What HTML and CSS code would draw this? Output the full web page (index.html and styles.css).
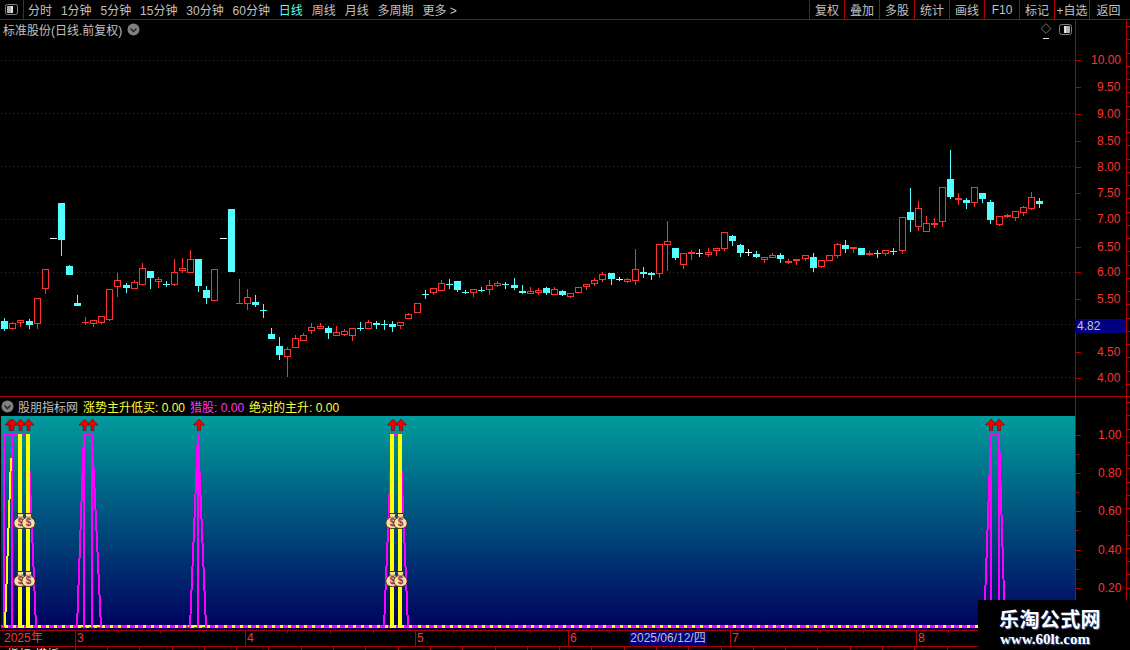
FILE: index.html
```html
<!DOCTYPE html>
<html lang="zh">
<head>
<meta charset="utf-8">
<title>K线图</title>
<link rel="stylesheet" href="styles.css">
</head>
<body>
<div class="page">
  <header class="toolbar">
    <div class="tool-icon">
      <svg class="layout-icon" width="13" height="11" viewBox="0 0 13 11"><rect x="0.5" y="0.5" width="12" height="10" rx="2" fill="#000" stroke="#808080"/><rect x="2" y="2" width="6" height="7" fill="#b0b0b0"/><rect x="6" y="2" width="2" height="7" fill="#e0e0e0"/></svg>
    </div>
    <nav class="periods">
      <span>分时</span><span>1分钟</span><span>5分钟</span><span>15分钟</span><span>30分钟</span><span>60分钟</span>
      <span class="active">日线</span><span>周线</span><span>月线</span><span>多周期</span><span>更多 &gt;</span>
    </nav>
    <div class="actions">
      <span>复权</span><span>叠加</span><span>多股</span><span>统计</span><span>画线</span><span>F10</span><span>标记</span><span>+自选</span><span class="last">返回</span>
    </div>
  </header>

  <section class="upper">
    <div class="plot-col">
      <div class="pane-head">
        <span class="title">标准股份(日线.前复权)</span>
        <svg class="chev" width="13" height="13" viewBox="0 0 13 13"><circle cx="6.5" cy="6.5" r="6" fill="#808080"/><path d="M3.5 5.5 6.5 8.5 9.5 5.5" fill="none" stroke="#222" stroke-width="1.4"/></svg>
        <div class="head-tools">
          <div class="diamond-wrap">
            <svg width="12" height="12" viewBox="0 0 12 12"><path d="M6 .7 11.3 6 6 11.3 .7 6Z" fill="none" stroke="#808080"/></svg>
            <i class="dash"></i>
          </div>
          <svg class="layout-icon" width="13" height="11" viewBox="0 0 13 11"><rect x="0.5" y="0.5" width="12" height="10" rx="2" fill="#000" stroke="#808080"/><rect x="5" y="2" width="6" height="7" fill="#b0b0b0"/><rect x="5" y="2" width="2" height="7" fill="#e0e0e0"/></svg>
        </div>
      </div>
      <svg id="candles" class="plot" width="1075" height="358" viewBox="0 38 1075 358"></svg>
    </div>
    <svg id="price-axis" class="axis" width="55" height="376" viewBox="1075 20 55 376"></svg>
  </section>

  <section class="lower">
    <div class="plot-col">
      <div class="ind-head">
        <svg class="chev" width="13" height="13" viewBox="0 0 13 13"><circle cx="6.5" cy="6.5" r="6" fill="#808080"/><path d="M3.5 5.5 6.5 8.5 9.5 5.5" fill="none" stroke="#222" stroke-width="1.4"/></svg>
        <span class="title">股朋指标网</span>
        <span class="yellow">涨势主升低买: 0.00</span>
        <span class="magenta">猎股: 0.00</span>
        <span class="yellow">绝对的主升: 0.00</span>
      </div>
      <div class="ind-plot">
        <svg id="indicator" class="plot" width="1075" height="214" viewBox="0 416 1075 214"></svg>
      </div>
    </div>
    <svg id="ind-axis" class="axis" width="55" height="234" viewBox="1075 396 55 234"></svg>
  </section>

  <footer class="date-axis">
    <span class="d-year">2025年</span><span class="d-mon">3</span><span class="d-mon">4</span><span class="d-mon">5</span><span class="d-mon">6</span><span class="d-mon">7</span><span class="d-mon">8</span>
    <svg id="date-ticks" class="date-ticks" width="1130" height="16" viewBox="0 631 1130 16"></svg>
    <span class="cursor-date">2025/06/12/四</span>
  </footer>
  <div class="tabs">
    <span>指标</span><span>模板</span>
    <svg id="tab-ticks" class="tab-ticks" width="1130" height="3" viewBox="0 0 1130 3"></svg>
  </div>

  <aside class="watermark">
    <div class="wm-cn">乐淘公式网</div>
    <div class="wm-en">www.60lt.com</div>
  </aside>
</div>
<script src="app.js"></script>
</body>
</html>
```

FILE: styles.css
```css
* { box-sizing: border-box; }
html, body { margin: 0; padding: 0; background: #000; }
body {
  font-family: "Liberation Sans", "Noto Sans CJK SC", sans-serif;
  font-size: 12px;
  color: #c0c0c0;
}
.page {
  position: relative;
  width: 1130px;
  height: 650px;
  overflow: hidden;
  display: flex;
  flex-direction: column;
  background: #000;
}
svg { display: block; }

.toolbar {
  height: 20px;
  flex: none;
  display: flex;
  align-items: stretch;
  border-bottom: 1px solid #b00000;
}
.tool-icon {
  width: 24px;
  flex: none;
  display: flex;
  align-items: center;
  justify-content: center;
  border-right: 1px solid #b00000;
}
.periods {
  display: flex;
  align-items: center;
  gap: 8.9px;
  padding-left: 4px;
  flex: 1;
  white-space: nowrap;
}
.periods .active { color: #54ffff; }
.actions { display: flex; align-items: stretch; padding-right: 3px; }
.actions span {
  width: 35px;
  display: flex;
  align-items: center;
  justify-content: center;
  border-left: 1px solid #b00000;
  white-space: nowrap;
}
.actions .last { width: 38px; }

.upper { display: flex; height: 376px; flex: none; }
.lower { display: flex; height: 234px; flex: none; }
.plot-col { width: 1075px; flex: none; display: flex; flex-direction: column; }
.axis { flex: none; }

.pane-head {
  height: 18px;
  display: flex;
  align-items: center;
  padding: 0 3px;
  gap: 5px;
}
.title { white-space: nowrap; }
.chev { flex: none; }
.head-tools {
  margin-left: auto;
  display: flex;
  align-items: flex-start;
  gap: 7px;
  padding-right: 0;
}
.diamond-wrap { display: flex; flex-direction: column; align-items: center; gap: 4px; height: 16px; margin-top: 3px; }
.dash { display: block; width: 6px; height: 1px; background: #e8e8e8; }
.head-tools .layout-icon { margin-top: 4px; }

.ind-head {
  height: 20px;
  display: flex;
  align-items: center;
  gap: 5px;
  padding-left: 1px;
  border-top: 1px solid #b00000;
  white-space: nowrap;
}
.ind-head .title { margin-left: -1px; }
.yellow { color: #ffff3c; }
.magenta { color: #ff32ff; }
.ind-plot {
  height: 214px;
  margin-left: 1px;
  background: linear-gradient(#009c9c, #00005e);
  overflow: hidden;
}
.ind-plot .plot { margin-left: -1px; }

.date-axis {
  position: relative;
  height: 17px;
  flex: none;
  display: grid;
  grid-template-columns: 75px 170px 170px 153px 162px 186px 1fr;
  border-top: 1px solid #b00000;
  border-bottom: 1px solid #b00000;
  color: #ff3232;
  line-height: 15px;
}
.d-year { padding-left: 4px; }
.d-mon { padding-left: 1px; border-left: 1px solid #b00000; }
.date-ticks { position: absolute; left: 0; top: 0; pointer-events: none; }
.cursor-date {
  position: absolute;
  left: 629px;
  top: 0;
  width: 78px;
  height: 15px;
  background: #000080;
  color: #c0c0c0;
  text-align: center;
  white-space: nowrap;
}
.tabs {
  position: relative;
  height: 3px;
  flex: none;
  overflow: hidden;
  display: flex;
  gap: 4px;
  padding-left: 7px;
  color: #e0e0e0;
  line-height: 17px;
}
.tab-ticks { position: absolute; left: 0; top: 0; }

.watermark {
  position: absolute;
  right: 0;
  bottom: 0;
  width: 152px;
  height: 50px;
  background: #000;
  color: #fff;
  padding: 7px 0 0 21px;
  white-space: nowrap;
}
.wm-cn {
  font-family: "Noto Sans CJK SC", sans-serif;
  font-size: 20px;
  font-weight: 700;
  line-height: 23px;
  letter-spacing: .4px;
  text-shadow: 1px 1px 1px #3a5a9a;
}
.wm-en {
  font-family: "Liberation Serif", serif;
  font-size: 15px;
  font-weight: 700;
  line-height: 16px;
  margin: 1px 0 0 1px;
  text-shadow: 1px 1px 1px #3a5a9a;
}
```

FILE: app.js
```js
var NS = "http://www.w3.org/2000/svg";
var RED = "#ff3232", CYAN = "#54ffff", WHITE = "#f0f0f0", LINE = "#b00000";

function el(parent, name, attrs, text) {
  var n = document.createElementNS(NS, name);
  for (var k in attrs) n.setAttribute(k, attrs[k]);
  if (text !== undefined) n.textContent = text;
  parent.appendChild(n);
  return n;
}
function cx(i) { return Math.round(4.3 + 8.083 * i); }

/* type, bodyTop, bodyBottom, wickTop, wickBottom */
var K = [
["c",321,329,318,331],["r",323,329,322,330],["r",320,323,320,327],["c",321,325,319,329],["r",298,324,298,329],
["r",269,289,269,294],["w",238,238,238,238],["c",203,240,203,256],["c",266,275,265,275],["c",303,306,295,306],
["r",322,322,317,325],["r",320,324,320,327],["r",316,323,316,324],["r",289,320,289,321],["r",280,287,273,297],
["c",285,288,283,293],["r",282,289,280,289],["r",268,285,263,285],["c",271,278,271,289],["r",279,282,277,288],
["c",284,284,281,287],["r",272,285,259,286],["r",268,271,258,273],["r",259,273,250,273],["c",259,286,259,292],
["c",290,298,286,304],["r",269,301,269,301],["w",238,238,238,238],["c",209,272,209,272],["r",303,303,279,303],
["r",297,304,289,310],["c",302,305,295,307],["c",310,310,304,318],["c",334,339,328,339],["c",346,355,337,360],
["r",349,357,347,377],["r",338,348,335,348],
["r",335,341,333,341],["r",327,331,323,334],["r",326,329,323,329],["c",328,333,326,339],["r",332,336,326,336],
["r",331,335,329,336],["r",328,336,328,341],["c",328,328,322,331],["r",322,329,320,329],["c",323,325,321,329],
["c",324,324,320,330],["c",324,327,321,332],["r",322,326,322,329],["r",314,319,313,319],["r",303,313,303,313],
["c",294,294,290,299],["r",288,293,288,295],["r",283,291,280,291],["c",284,284,279,289],["c",281,290,281,292],
["c",292,292,290,294],["r",289,293,289,297],["c",290,290,287,292],["r",285,290,280,295],["r",283,286,281,287],
["c",284,284,282,289],["c",285,288,278,290],["c",291,293,285,294],["r",291,294,287,294],["r",290,293,288,295],
["c",288,293,287,295],["r",289,295,287,295],["c",291,295,290,296],["r",293,297,293,298],["r",287,293,287,293],
["r",284,287,284,290],["r",280,284,278,286],
["r",274,280,272,282],["c",273,279,273,285],["w",279,279,277,281],["r",279,282,278,283],["r",269,281,249,285],
["C",272,274,267,278],["c",273,275,272,280],["r",244,274,244,278],["r",241,245,221,271],["c",248,258,248,260],
["r",253,265,253,269],["R",252,254,250,260],["c",253,253,249,257],["r",252,255,248,257],["r",248,251,248,256],
["r",232,249,232,251],["c",236,241,235,246],["c",245,253,244,257],["w",252,252,249,256],["c",254,257,251,258],
["r",257,260,257,263],["r",255,258,253,258],["c",255,259,253,263],["R",261,263,259,264],["R",259,261,259,265],
["r",255,259,255,261],["c",257,268,253,272],["r",260,267,260,268],["r",255,261,255,261],["r",244,256,243,258],
["c",245,249,240,253],["R",247,249,247,253],["c",248,255,248,255],
["R",253,255,251,256],["c",253,253,250,258],["r",250,254,250,256],["c",251,251,248,255],["r",217,251,217,254],
["c",212,220,188,232],["r",208,227,201,231],["r",223,232,216,232],["R",223,225,218,228],["r",187,222,187,227],
["c",179,197,150,199],["R",198,200,193,205],["c",200,203,198,209],["r",187,203,187,207],["c",193,199,193,203],
["c",202,220,200,224],["r",216,225,216,226],["R",215,217,214,218],["r",211,218,211,221],["r",207,213,206,216],
["r",197,209,192,210],["c",201,204,198,208]
];

/* main chart */
(function () {
  var s = document.getElementById("candles");
  [60, 113, 166, 219, 272, 324, 377].forEach(function (y) {
    el(s, "line", { x1: 1, x2: 1075, y1: y + 0.5, y2: y + 0.5, stroke: "#a80000", "stroke-dasharray": "1 3" });
  });
  K.forEach(function (k, i) {
    var c = cx(i), t = k[0], col = t === "c" || t === "C" ? CYAN : t === "w" ? WHITE : RED;
    if (k[3] !== k[4]) el(s, "rect", { x: c, y: k[3], width: 1, height: k[4] - k[3], fill: col });
    if (k[1] === k[2]) {
      el(s, "rect", { x: c - 3, y: k[1], width: 7, height: 1, fill: col });
    } else if (t === "r") {
      el(s, "rect", { x: c - 2.5, y: k[1] + 0.5, width: 6, height: k[2] - k[1] - 1, fill: "#000", stroke: col });
    } else {
      el(s, "rect", { x: c - 3, y: k[1], width: 7, height: k[2] - k[1], fill: col });
    }
  });
})();

function axisBase(s, top, bottom) {
  el(s, "rect", { x: 1075, y: top, width: 1, height: bottom - top, fill: LINE });
  el(s, "rect", { x: 1126, y: top, width: 1, height: bottom - top, fill: LINE });
  for (var y = top + 6; y < bottom; y += 13.25) {
    el(s, "rect", { x: 1127, y: Math.round(y), width: 3, height: 1, fill: LINE });
  }
}
function label(s, x, y, text, fill) {
  el(s, "text", { x: x, y: y + 4, fill: fill || RED, "font-size": 12 }, text);
}

/* price axis */
(function () {
  var s = document.getElementById("price-axis");
  axisBase(s, 20, 396);
  var labels = [["10.00",60],["9.50",87],["9.00",114],["8.50",141],["8.00",167],["7.50",193],["7.00",219],
                ["6.50",247],["6.00",272],["5.50",299],["4.50",352],["4.00",378]];
  labels.forEach(function (l) {
    el(s, "rect", { x: 1076, y: l[1], width: 5, height: 1, fill: LINE });
    label(s, l[0].length > 4 ? 1091 : 1097, l[1], l[0]);
  });
  el(s, "rect", { x: 1075, y: 319, width: 51, height: 14, fill: "#000080" });
  label(s, 1077, 326, "4.82", "#c8c8c8");
})();

/* indicator axis */
(function () {
  var s = document.getElementById("ind-axis");
  axisBase(s, 396, 630);
  el(s, "rect", { x: 1075, y: 396, width: 55, height: 1, fill: LINE });
  [["1.00",435],["0.80",473],["0.60",511],["0.40",550],["0.20",588]].forEach(function (l) {
    el(s, "rect", { x: 1076, y: l[1], width: 5, height: 1, fill: LINE });
    el(s, "rect", { x: 1076, y: l[1] + 19, width: 3, height: 1, fill: LINE });
    label(s, 1098, l[1], l[0]);
  });
})();

/* indicator */
(function () {
  var s = document.getElementById("indicator");
  var M = "#ff00ff", Y = "#ffff00", TOP = 434, BASE = 627;

  function seg(x1, y1, x2, y2, col) {
    el(s, "line", { x1: x1, y1: y1, x2: x2, y2: y2, stroke: col, "stroke-width": 2, "shape-rendering": "crispEdges" });
  }
  function peak(left, a, b, right) {
    seg(left, BASE, a, TOP, M);
    seg(a, TOP, b, TOP, M);
    seg(b, TOP, right, BASE, M);
    seg(a, TOP, a, BASE, M);
    if (b !== a) seg(b, TOP, b, BASE, M);
  }

  /* base line with yellow dashes */
  el(s, "rect", { x: 1, y: 625, width: 1074, height: 3, fill: M });
  for (var i = 0; i < 133; i++) {
    el(s, "rect", { x: cx(i) + 1, y: 625, width: 3, height: 3, fill: Y });
  }
  el(s, "rect", { x: 76, y: 625, width: 26, height: 2, fill: Y });
  el(s, "rect", { x: 188, y: 625, width: 20, height: 2, fill: Y });

  peak(4, 4, 12, 12);
  peak(12, 12, 28, 36);
  seg(5, BASE, 11, 458, Y);
  peak(77, 84, 92, 101);
  peak(190, 198, 198, 206);
  peak(384, 392, 400, 408);
  peak(984, 991, 999, 1005);

  [20, 28, 392, 400].forEach(function (x) {
    el(s, "rect", { x: x - 2, y: 434, width: 4, height: 194, fill: Y });
  });

  [10.5, 12.5, 20.5, 28.5, 84.5, 92.5, 199, 393, 401, 991, 999].forEach(function (x) {
    var g = el(s, "g", { transform: "translate(" + x + " 419)" });
    el(g, "path", { d: "M0 0 5.5 6 1.5 6 1.5 11.5 -1.5 11.5 -1.5 6 -5.5 6Z", fill: "#f00000", stroke: "#7a0000", "stroke-width": 0.6 });
  });

  [[20.5,521],[28.5,521],[20.5,579],[28.5,579],[392.5,521],[400.5,521],[392.5,579],[400.5,579]].forEach(function (p) {
    var g = el(s, "g", { transform: "translate(" + p[0] + " " + p[1] + ")" });
    el(g, "path", { d: "M-3.5 -7.5 3.5 -7.5 2.5 -3.5C6 -2 7 1 6.5 3.5 6 6.5 3.5 7.5 0 7.5 -3.5 7.5 -6 6.5 -6.5 3.5 -7 1 -6 -2 -2.5 -3.5Z", fill: "#f7e0a4", stroke: "#4a2a10", "stroke-width": 1 });
    el(g, "rect", { x: -3, y: -4.2, width: 6, height: 1, fill: "#b88a30" });
    el(g, "text", { x: 0, y: 5, "text-anchor": "middle", "font-size": 10, "font-weight": 700, fill: "#8a3a4a" }, "$");
  });
})();

/* date ticks */
(function () {
  var s = document.getElementById("date-ticks");
  [118, 160, 203, 287, 330, 373, 453, 530, 609, 777, 820, 863, 948].forEach(function (x) {
    el(s, "rect", { x: x, y: 631, width: 1, height: 2, fill: LINE });
  });
  var t = document.getElementById("tab-ticks");
  for (var x = 10; x < 980; x += 32.3) {
    el(t, "rect", { x: Math.round(x), y: 0, width: 1, height: 3, fill: LINE });
  }
})();
```
